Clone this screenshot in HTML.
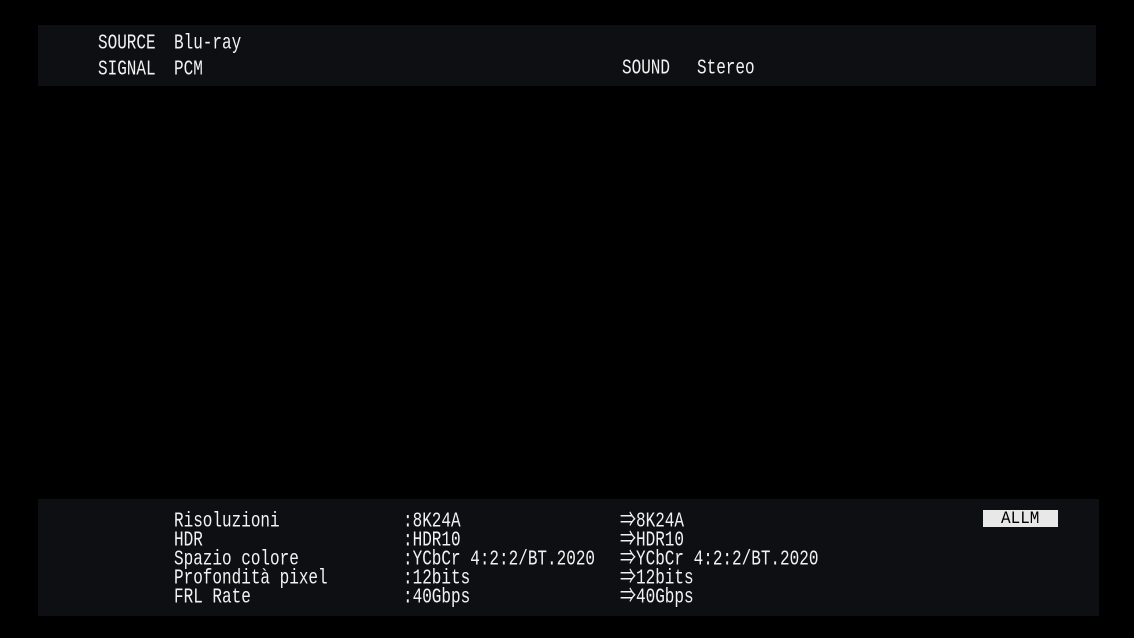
<!DOCTYPE html>
<html><head><meta charset="utf-8"><style>
body{margin:0;width:1134px;height:638px;background:#000;overflow:hidden;position:relative;font-family:"Liberation Mono","Noto Sans CJK JP",monospace;color:#f2f2f2}
.p{position:absolute;background:#0d0f12}
.t{position:absolute;font-size:16px;line-height:16px;white-space:pre;transform:scale(1,1.3);transform-origin:0 0}
</style></head><body>
<div class="p" style="left:38px;top:25px;width:1058px;height:61px"></div>
<div class="p" style="left:38px;top:499px;width:1061px;height:117px"></div>
<div class="t" style="left:98px;top:33px">SOURCE</div>
<div class="t" style="left:174px;top:33px">Blu-ray</div>
<div class="t" style="left:98px;top:59px">SIGNAL</div>
<div class="t" style="left:174px;top:59px">PCM</div>
<div class="t" style="left:622px;top:58px">SOUND</div>
<div class="t" style="left:697px;top:58px">Stereo</div>

<div class="t" style="left:174px;top:511px">Risoluzioni</div>
<div class="t" style="left:174px;top:530px">HDR</div>
<div class="t" style="left:174px;top:549px">Spazio colore</div>
<div class="t" style="left:174px;top:568px">Profondità pixel</div>
<div class="t" style="left:174px;top:587px">FRL Rate</div>

<div class="t" style="left:403px;top:511px">:8K24A</div>
<div class="t" style="left:403px;top:530px">:HDR10</div>
<div class="t" style="left:403px;top:549px">:YCbCr 4:2:2/BT.2020</div>
<div class="t" style="left:403px;top:568px">:12bits</div>
<div class="t" style="left:403px;top:587px">:40Gbps</div>

<div class="t" style="left:620px;top:511px">⇒8K24A</div>
<div class="t" style="left:620px;top:530px">⇒HDR10</div>
<div class="t" style="left:620px;top:549px">⇒YCbCr 4:2:2/BT.2020</div>
<div class="t" style="left:620px;top:568px">⇒12bits</div>
<div class="t" style="left:620px;top:587px">⇒40Gbps</div>

<div style="position:absolute;left:983px;top:510px;width:75px;height:17px;background:#e8e8e8"></div>
<div class="t" style="left:1001px;top:510px;color:#000;transform:scale(1,1.1)">ALLM</div>
</body></html>
